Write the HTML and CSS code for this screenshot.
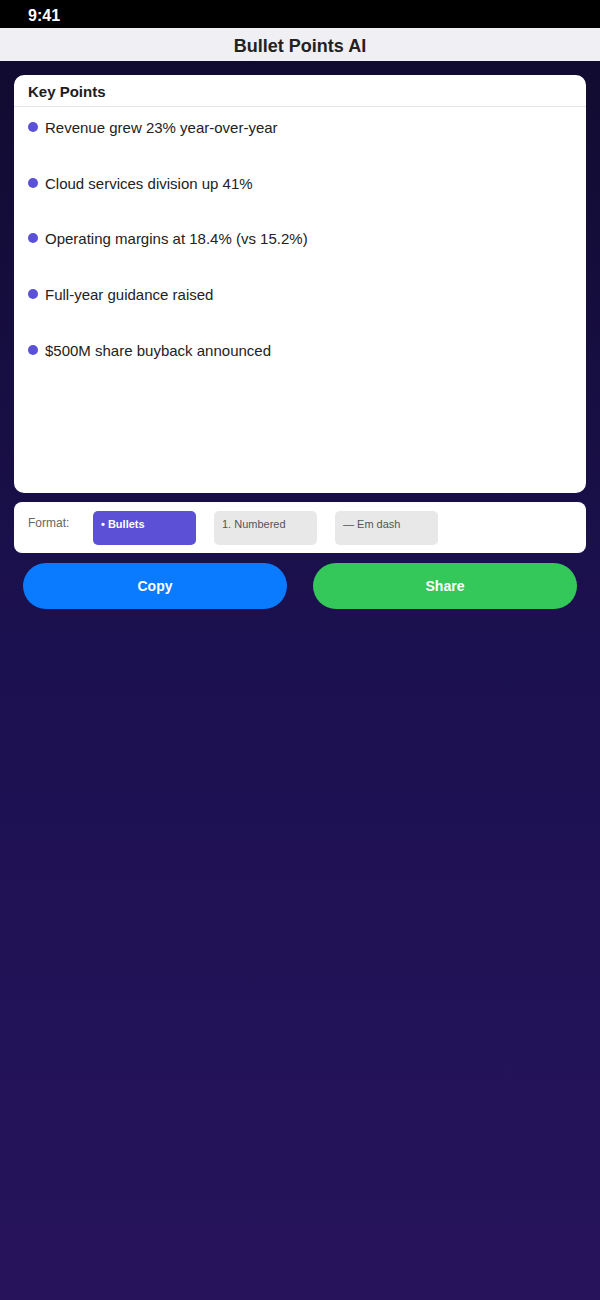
FILE: index.html
```html
<!DOCTYPE html>
<html lang="en">
<head>
<meta charset="utf-8">
<title>Bullet Points AI</title>
<link rel="stylesheet" href="styles.css">
</head>
<body>
<div class="app">
  <div class="status-bar"><span class="time">9:41</span></div>
  <div class="nav-bar"><h1 class="nav-title">Bullet Points AI</h1></div>
  <main class="content">
    <section class="card points-card">
      <div class="card-header">Key Points</div>
      <ul class="points">
        <li class="point"><span class="dot"></span><span>Revenue grew 23% year-over-year</span></li>
        <li class="point"><span class="dot"></span><span>Cloud services division up 41%</span></li>
        <li class="point"><span class="dot"></span><span>Operating margins at 18.4% (vs 15.2%)</span></li>
        <li class="point"><span class="dot"></span><span>Full-year guidance raised</span></li>
        <li class="point"><span class="dot"></span><span>$500M share buyback announced</span></li>
      </ul>
    </section>
    <section class="card format-card">
      <span class="format-label">Format:</span>
      <div class="chips">
        <button class="chip chip-active">• Bullets</button>
        <button class="chip">1. Numbered</button>
        <button class="chip">— Em dash</button>
      </div>
    </section>
    <div class="actions">
      <button class="action action-copy">Copy</button>
      <button class="action action-share">Share</button>
    </div>
  </main>
</div>
</body>
</html>
```

FILE: styles.css
```css
* { box-sizing: border-box; }
html, body { margin: 0; padding: 0; }
body {
  font-family: "Liberation Sans", Arial, sans-serif;
  background: linear-gradient(180deg, #100a2d 0%, #1c1150 50%, #26135c 100%);
  min-height: 1300px;
  color: #222;
}
.app { min-height: 1300px; display: flex; flex-direction: column; }
.status-bar {
  height: 28px;
  background: #000;
  display: flex;
  align-items: center;
  padding: 3px 0 0 28px;
}
.time { color: #fff; font-weight: 700; font-size: 16px; }
.nav-bar {
  height: 33px;
  background: #efeff4;
  display: flex;
  align-items: center;
  justify-content: center;
  padding-top: 3px;
}
.nav-title { margin: 0; font-size: 18px; font-weight: 700; color: #222; }
.content { padding: 14px 14px 0; display: flex; flex-direction: column; }
.card { background: #fff; border-radius: 10px; }
.points-card { height: 418px; }
.card-header {
  height: 32px;
  padding: 2px 14px 0;
  display: flex;
  align-items: center;
  font-size: 15px;
  font-weight: 700;
  color: #1c1c1e;
  border-bottom: 1px solid #e4e4e8;
}
.points { list-style: none; margin: 0; padding: 11px 14px 0; }
.point {
  height: 55.7px;
  display: flex;
  align-items: flex-start;
  gap: 7px;
  font-size: 15px;
  color: #222;
  line-height: 20px;
}
.dot {
  width: 10px; height: 10px; border-radius: 50%;
  background: #5b50d8;
  margin-top: 4px;
  flex: none;
}
.format-card {
  margin-top: 9px;
  height: 51px;
  border-radius: 8px;
  display: flex;
  align-items: flex-start;
  padding: 9px 14px 0;
}
.format-label { font-size: 12px; color: #666; margin-top: 5px; width: 65px; flex: none; }
.chips { display: flex; gap: 18px; }
.chip {
  width: 103px; height: 34px;
  border: none; border-radius: 5px;
  background: #e8e8e8;
  color: #555;
  font-family: inherit; font-size: 11px;
  text-align: left;
  padding: 0 8px;
  display: flex; align-items: flex-start; padding-top: 7px;
}
.chip-active { background: #5b50d6; color: #fff; font-weight: 700; }
.actions { display: flex; justify-content: space-between; padding: 10px 9px 0; }
.action {
  width: 264px; height: 46px;
  border: none; border-radius: 23px;
  color: #fff; font-family: inherit; font-size: 14px; font-weight: 700;
}
.action-copy { background: #0a7aff; }
.action-share { background: #34c759; }
```
